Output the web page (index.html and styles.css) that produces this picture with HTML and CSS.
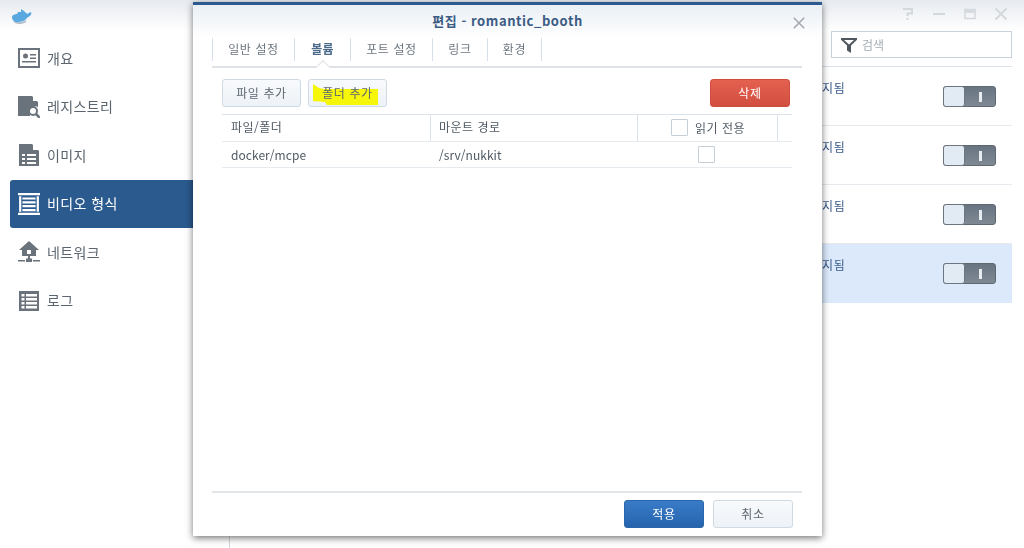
FILE: index.html
```html
<!DOCTYPE html>
<html lang="ko">
<head>
<meta charset="utf-8">
<title>Docker</title>
<link rel="stylesheet" href="styles.css">
</head>
<body>
<div class="app">
  <header class="titlebar">
    <svg class="logo" viewBox="0 0 21 17" width="21" height="17"><path d="M3 14c3 2.800 8 2.800 12 0" stroke="#b4c0ca" stroke-width="2" fill="none"/><path d="M1 10C1 8 4 7 6 7l1-2h3V2l3 2 2 2 2 1c1-2 3-2 3.500-1-.5 3-3.500 4-4.500 5-2 3-6 4-9 4-4 0-6-2-6-5z" fill="#5aa8e0"/></svg>
    <div class="winctl">
      <svg viewBox="0 0 14 14" width="14" height="14"><path d="M2 2h9v4.500H6.500V9M6.500 11v2" fill="none" stroke="#d3d8dd" stroke-width="2"/></svg>
      <svg viewBox="0 0 14 14" width="14" height="14"><path d="M1 7h12" stroke="#d3d8dd" stroke-width="2"/></svg>
      <svg viewBox="0 0 14 14" width="14" height="14"><path d="M2 2.500h10v9H2z" fill="none" stroke="#d3d8dd" stroke-width="1.500"/><path d="M2 4.500h10" stroke="#d3d8dd" stroke-width="2.500"/></svg>
      <svg viewBox="0 0 14 14" width="14" height="14"><path d="M1.500 1.500l11 11M12.500 1.500l-11 11" stroke="#d3d8dd" stroke-width="1.800"/></svg>
    </div>
  </header>
  <div class="body">
    <nav class="sidebar">
      <a class="nav-item">
        <svg class="nav-icon" viewBox="0 0 22 20"><path fill-rule="evenodd" d="M0 0h22v20H0zM2 2v16h18V2z" fill="#6a737c"/><path d="M3 3h16v14H3z" fill="#fff"/><path d="M12 6h6v1.500h-6zM12 9.500h6V11h-6zM4 13h14v1.500H4z" fill="#6a737c"/><circle cx="7.500" cy="8" r="2.500" fill="#6a737c"/></svg>
        <span>개요</span>
      </a>
      <a class="nav-item">
        <svg class="nav-icon" viewBox="0 0 22 22"><path d="M0 0h14l6 6v5a6 6 0 0 0-8 8v1H0z" fill="#6a737c"/><path d="M15 0l5 5h-5z" fill="#fff"/><circle cx="15" cy="15" r="4" fill="none" stroke="#6a737c" stroke-width="2"/><path d="M18 18l4 4" stroke="#6a737c" stroke-width="2.500"/></svg>
        <span>레지스트리</span>
      </a>
      <a class="nav-item">
        <svg class="nav-icon" viewBox="0 0 22 22"><path d="M1 0h13l7 7v15H1z" fill="#6a737c"/><path d="M15 0l6 6h-6z" fill="#fff"/><path d="M4 10h3v2H4zM9 10h9v2H9zM4 14h3v2H4zM9 14h9v2H9zM4 18h3v2H4zM9 18h9v2H9z" fill="#fff"/></svg>
        <span>이미지</span>
      </a>
      <a class="nav-item active">
        <svg class="nav-icon" viewBox="0 0 20 20"><path d="M0 0h20v2H0zM0 18h20v2H0zM1 3h2v14H1zM17 3h2v14h-2zM4 4h12v2H4zM4 7.500h12v2H4zM4 11h12v2H4zM4 14.500h12v2H4z" fill="#fff"/></svg>
        <span>비디오 형식</span>
      </a>
      <a class="nav-item">
        <svg class="nav-icon" viewBox="0 0 22 22"><path d="M11 0l10 9h-3v6H4V9H1z" fill="#6a737c"/><path d="M9 9h4v4H9z" fill="#fff"/><path d="M10 15h2v3h-2zM0 19h7v1.500H0zM15 19h7v1.500h-7zM8 17.500h6v3.500H8z" fill="#6a737c"/></svg>
        <span>네트워크</span>
      </a>
      <a class="nav-item">
        <svg class="nav-icon" viewBox="0 0 22 22"><path d="M1 1h20v20H1z" fill="#6a737c"/><path d="M3.500 4h3v2.500h-3zM8 4h11v2.500H8zM3.500 8h3v2.500h-3zM8 8h11v2.500H8zM3.500 12h3v2.500h-3zM8 12h11v2.500H8zM3.500 16h3v2.500h-3zM8 16h11v2.500H8z" fill="#fff"/></svg>
        <span>로그</span>
      </a>
    </nav>
    <main class="content">
      <div class="toolbar">
        <div class="search">
          <svg viewBox="0 0 16 16" width="16" height="16"><path d="M0 1h16v1.800L10 8.500V16l-4-2.500V8.500L0 2.800z" fill="#4f565d"/><path d="M3 3h10L8 7.500z" fill="#fff"/></svg>
          <span>검색</span>
        </div>
      </div>
      <div class="row"><span class="status">지됨</span><span class="toggle"><i class="thumb"></i><i class="mark"></i></span></div>
      <div class="row"><span class="status">지됨</span><span class="toggle"><i class="thumb"></i><i class="mark"></i></span></div>
      <div class="row"><span class="status">지됨</span><span class="toggle"><i class="thumb"></i><i class="mark"></i></span></div>
      <div class="row selected"><span class="status">지됨</span><span class="toggle"><i class="thumb"></i><i class="mark"></i></span></div>
    </main>
  </div>

  <section class="modal">
    <div class="modal-head">
      <h1>편집 - romantic_booth</h1>
      <svg class="modal-close" viewBox="0 0 12 12" width="12" height="12"><path d="M.8.8l10.400 10.400M11.200.8L.8 11.200" stroke="#a3a9ae" stroke-width="1.600"/></svg>
    </div>
    <div class="tabs">
      <span class="tab t1">일반 설정</span>
      <span class="tab t2 current">볼륨</span>
      <span class="tab t3">포트 설정</span>
      <span class="tab t4">링크</span>
      <span class="tab t5">환경</span>
    </div>
    <div class="modal-body">
      <div class="actions">
        <button class="btn">파일 추가</button>
        <button class="btn marked"><svg class="marker" viewBox="0 0 66 21" width="66" height="21"><path d="M0 0l6 4 5 1h54v16H14l-2-3-12-1z" fill="#f6f60a"/></svg><span class="label">폴더 추가</span></button>
        <button class="btn danger">삭제</button>
      </div>
      <div class="table">
        <div class="tr head">
          <div class="c1">파일/폴더</div>
          <div class="c2">마운트 경로</div>
          <div class="c3"><i class="check"></i><span>읽기 전용</span></div>
          <div class="c4"></div>
        </div>
        <div class="tr">
          <div class="c1 latin">docker/mcpe</div>
          <div class="c2 latin">/srv/nukkit</div>
          <div class="c3"><i class="check"></i></div>
          <div class="c4"></div>
        </div>
      </div>
    </div>
    <div class="modal-foot">
      <button class="btn primary">적용</button>
      <button class="btn">취소</button>
    </div>
  </section>
</div>
</body>
</html>
```
FILE: styles.css
```css
* { box-sizing: border-box; }
html, body { margin: 0; height: 100%; background: #fff; overflow: hidden; }
body { font-family: "Noto Sans CJK KR", "Noto Sans", sans-serif; font-size: 12px; color: #505a64; }
.app { position: relative; width: 1024px; height: 548px; overflow: hidden; display: flex; flex-direction: column; filter: blur(.35px); }

.titlebar { height: 31px; flex: none; display: flex; align-items: center; justify-content: space-between; padding: 0 16px 0 11px; background: linear-gradient(#e7ebef, #fff); }
.logo { margin-top: -1px; }
.winctl { display: flex; gap: 17px; margin-top: -3px; }

.body { flex: 1; display: flex; min-height: 0; }
.sidebar { width: 230px; flex: none; border-right: 1px solid #d4d8dc; padding: 3px 0 0 10px; display: flex; flex-direction: column; }
.nav-item { height: 48.500px; display: flex; align-items: center; gap: 7px; padding-left: 8px; font-size: 14px; letter-spacing: .4px; color: #5b6570; border-radius: 3px 0 0 3px; }
.nav-item span { margin-top: -1px; }
.nav-item.active { background: #2a5a8e; color: #fff; }
.nav-icon { width: 22px; height: 22px; flex: none; }

.content { flex: 1; padding-right: 12px; }
.toolbar { height: 36px; display: flex; justify-content: flex-end; border-bottom: 1px solid #dbe3ec; }
.search { width: 181px; height: 27px; border: 1px solid #c8d2dc; display: flex; align-items: center; gap: 5px; padding-left: 9px; color: #a5acb3; }
.row { height: 59px; display: flex; align-items: flex-start; justify-content: space-between; padding: 12px 16px 0 592px; border-bottom: 1px solid #e6eaee; color: #3a5a88; }
.row.selected { background: #dbe9fb; border-bottom: 0; }
.status { letter-spacing: .8px; line-height: 18px; }
.toggle { position: relative; width: 53px; height: 21px; margin-top: 7px; border: 1px solid #5f6871; border-radius: 3px; background: linear-gradient(#687480, #7e8994); display: block; }
.thumb { display: block; position: absolute; left: -1px; top: -1px; width: 22px; height: 21px; background: #e2eaf4; border: 1px solid #6d7680; border-radius: 3px; }
.mark { display: block; position: absolute; left: 35px; top: 5px; width: 3px; height: 10px; background: #e8edf2; }

.modal { position: absolute; left: 193px; top: 2px; width: 629px; height: 534px; background: #fff; border-top: 3px solid #2a5a8e; box-shadow: 0 2px 7px rgba(0,0,0,.55); display: flex; flex-direction: column; padding: 0 20px 0 19px; }
.modal-head { height: 33px; flex: none; margin: 0 -20px 0 -19px; padding-bottom: 2px; background: linear-gradient(#e9eff5, #fff); display: flex; align-items: center; justify-content: center; position: relative; }
.modal-head h1 { margin: 0; font-size: 13px; font-weight: 700; color: #3c5c84; letter-spacing: .56px; }
.modal-close { position: absolute; right: 17px; top: 12px; }

.tabs { height: 30px; flex: none; display: flex; border-bottom: 2px solid #dfe3e7; align-items: flex-start; }
.tab { height: 23px; padding-bottom: 2px; display: flex; align-items: center; justify-content: center; border-left: 1px solid #d5e0ea; letter-spacing: .6px; color: #6c7680; }
.t1 { width: 82px; }
.t2 { width: 56px; position: relative; letter-spacing: .1px; }
.t3 { width: 82px; }
.t4 { width: 55px; }
.t5 { width: 55px; border-right: 1px solid #d5e0ea; }
.tab.current { font-weight: 700; color: #4d6a8a; }
.tab.current::after { content: ""; position: absolute; left: 23px; top: 24px; width: 9px; height: 9px; background: #fff; border-left: 1px solid #dfe3e7; border-top: 1px solid #dfe3e7; transform: rotate(45deg); }

.modal-body { flex: 1; padding: 11px 0 0 10px; min-height: 0; }
.actions { display: flex; gap: 7px; height: 28px; }
.btn { width: 79px; height: 28px; padding: 0 0 2px; font: inherit; letter-spacing: .6px; color: #5d6770; border: 1px solid #cfdae4; border-radius: 3px; background: linear-gradient(#f8fafc, #edf2f7); position: relative; }
.marked .label { position: relative; }
.marker { position: absolute; left: 4px; top: 4px; }
.danger { margin-left: auto; margin-right: 12px; width: 80px; color: #fff; background: linear-gradient(#e4604f, #d24f40); border-color: #d04c3e; }
.primary { width: 80px; color: #fff; background: linear-gradient(#3a7cc8, #2563ad); border-color: #2a66ad; }

.table { margin-top: 7px; width: 570px; border-top: 1px solid #dbe4ee; letter-spacing: .5px; }
.tr { display: grid; grid-template-columns: 209px 207px 140px 14px; height: 27px; border-bottom: 1px solid #e6ebf0; align-items: stretch; }
.head > div { padding-bottom: 3px; }
.tr:not(.head) { height: 26px; }
.tr > div { display: flex; align-items: center; padding-left: 9px; border-right: 1px solid #dbe4ee; }
.tr:not(.head) > div { border-right: 0; }
.tr > .c2 { padding-left: 8px; }
.tr > .latin { letter-spacing: .05px; }
.tr > .c3 { padding-left: 33px; gap: 7px; }
.head > .c3 { padding-bottom: 1px; }
.tr:not(.head) > .c3 { padding-left: 60px; }
.tr > .c4 { border-right: 0; }
.check { display: block; width: 17px; height: 17px; flex: none; background: #fff; border: 1px solid #c6ced6; border-radius: 1px; }

.modal-foot { height: 45px; flex: none; border-top: 2px solid #e3e6e9; display: flex; justify-content: flex-end; gap: 9px; padding: 7px 9px 0 0; }
.modal-foot .btn { width: 80px; }
```
